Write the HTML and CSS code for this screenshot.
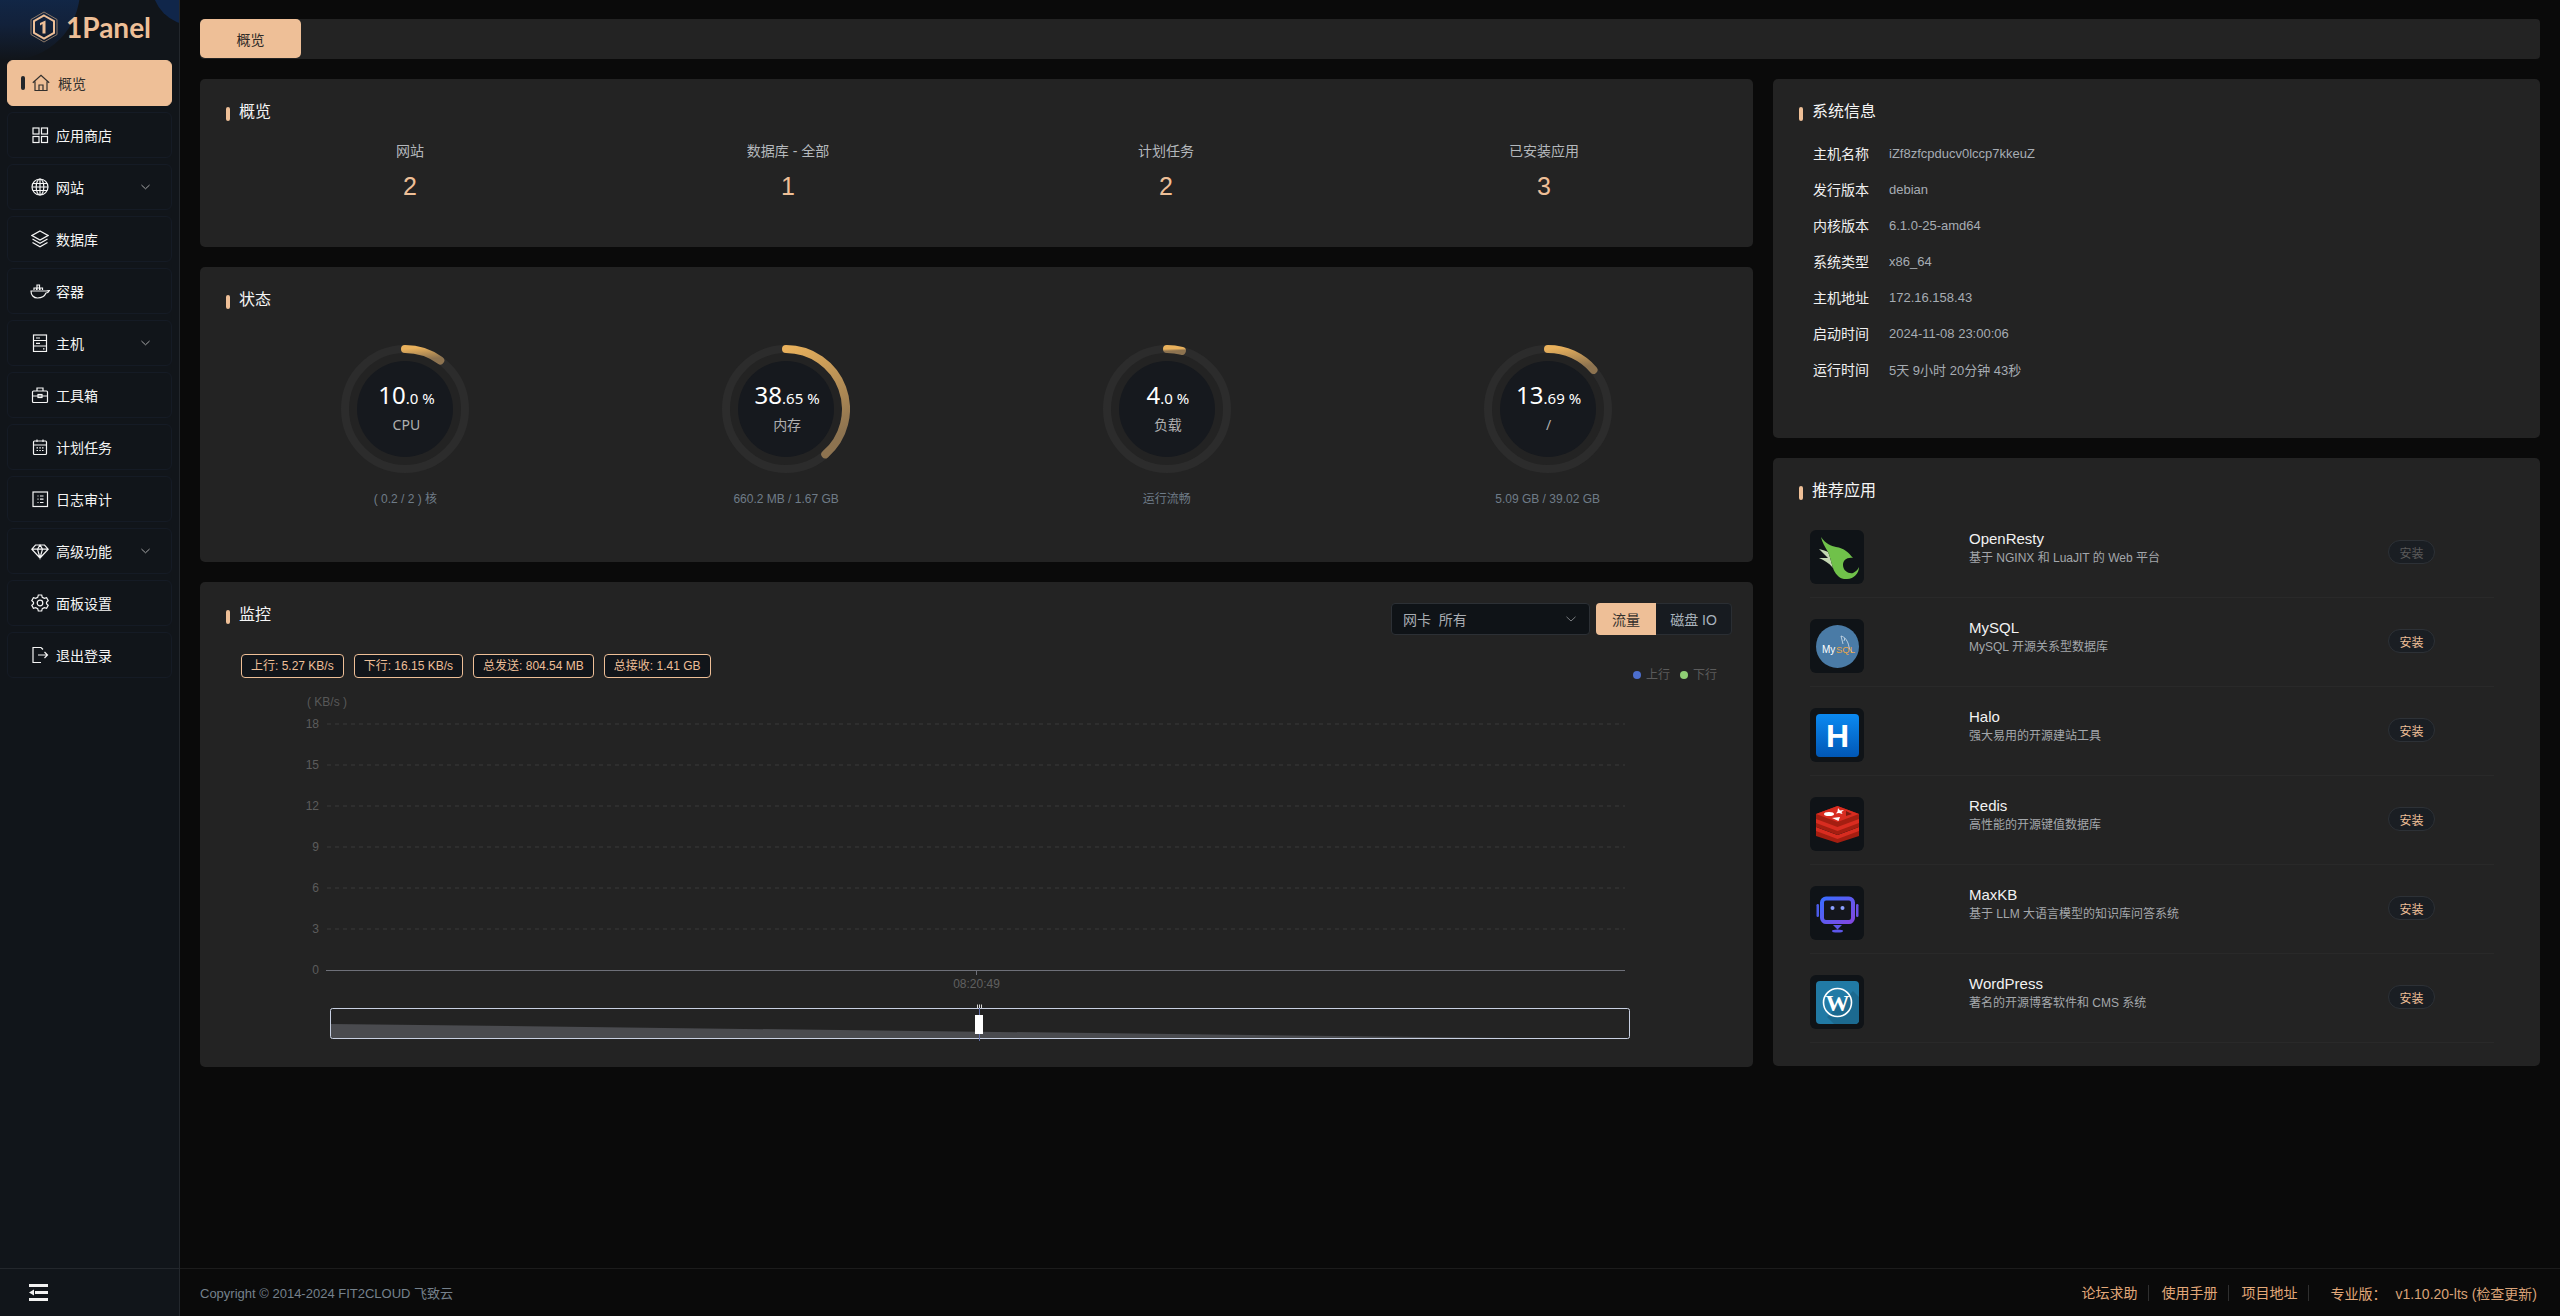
FILE: index.html
```html
<!DOCTYPE html>
<html lang="zh">
<head>
<meta charset="utf-8">
<title>1Panel</title>
<link rel="stylesheet" href="styles.css">
</head>
<body>
<svg class="defs" width="0" height="0" aria-hidden="true">
  <defs>
    <linearGradient id="arc" x1="0" y1="0" x2="0.35" y2="1">
      <stop offset="0" stop-color="#e9b15c"/>
      <stop offset="1" stop-color="#8d7350"/>
    </linearGradient>
    <linearGradient id="halo" x1="0" y1="0" x2="0" y2="1">
      <stop offset="0" stop-color="#0b8af2"/>
      <stop offset="1" stop-color="#0157b5"/>
    </linearGradient>
    <linearGradient id="maxkb" x1="0" y1="0" x2="1" y2="1">
      <stop offset="0" stop-color="#3b6cff"/>
      <stop offset="1" stop-color="#8147e0"/>
    </linearGradient>
  </defs>
</svg>
<aside class="sidebar">
  <span class="glow glow-a"></span>
  <span class="glow glow-b"></span>
  <div class="logo">
    <svg class="logo-mark" viewBox="0 0 28 32">
      <path d="M14 1 L27 8.5 V23.500 L14 31 L1 23.500 V8.500Z" fill="none" stroke="#8a7767" stroke-width="1"/>
      <path d="M14 4.500 L24 10.200 V21.800 L14 27.500 L4 21.800 V10.200Z" fill="none" stroke="#eebf97" stroke-width="2"/>
      <path d="M15.500 9.500 V22.500 H12.500 V13 L10 14.500 V12 Z" fill="#eebf97"/>
    </svg>
    <span class="logo-text">1Panel</span>
  </div>
  <nav class="menu">
    <a class="item active"><span class="pip"></span>
      <svg class="ico" viewBox="0 0 18 18"><path d="M.8 8.800 9 1.300l8.200 7.500M3 7.500V16.500H15V7.500M7 16.500V11H11V16.500"/></svg>概览</a>
    <a class="item">
      <svg class="ico" viewBox="0 0 18 18"><rect x="2" y="2" width="6" height="6"/><rect x="10.500" y="2" width="6" height="6"/><rect x="2" y="10.500" width="6" height="6"/><rect x="10.500" y="10.500" width="6" height="6"/></svg>应用商店</a>
    <a class="item">
      <svg class="ico" viewBox="0 0 18 18"><circle cx="9" cy="9" r="8"/><ellipse cx="9" cy="9" rx="3.800" ry="8"/><path d="M9 1V17M1.800 5.500H16.200M1 9H17M1.800 12.500H16.200"/></svg>网站
      <svg class="chev" viewBox="0 0 10 6"><path d="M.5.800 5 5 9.500.8"/></svg></a>
    <a class="item">
      <svg class="ico" viewBox="0 0 18 18"><path d="M9 1 17 5.500 9 10 1 5.500Z"/><path d="M1.500 9 9 13.200 16.500 9M1.500 12.500 9 16.800 16.500 12.500"/></svg>数据库</a>
    <a class="item">
      <svg class="ico wide" viewBox="0 0 20 18"><path d="M1 9H16.500C17 9 18 8.500 19.500 8.500 18.500 10.500 17 11 16 11 14.500 14.500 11.500 16 7.500 16 3.500 16 1 13 1 9Z"/><path d="M4 8V6H6.500V8M7 8V6H9.500V8M10 8V6H12.500V8M7 5.500V3H9.500V5.500"/></svg>容器</a>
    <a class="item">
      <svg class="ico" viewBox="0 0 18 18"><rect x="2.500" y="1" width="13" height="16.500"/><path d="M2.500 6.500H15.500M2.500 12H15.500M5 4H9M5 9.300H9M12 14.800H13.500"/></svg>主机
      <svg class="chev" viewBox="0 0 10 6"><path d="M.5.800 5 5 9.500.8"/></svg></a>
    <a class="item">
      <svg class="ico" viewBox="0 0 18 18"><rect x="1.500" y="5" width="15" height="11.500" rx="1"/><path d="M6 5V2H12V5M1.500 10H16.500"/><rect x="7" y="8.500" width="4" height="3"/></svg>工具箱</a>
    <a class="item">
      <svg class="ico" viewBox="0 0 18 18"><rect x="2.500" y="3" width="13" height="13.500" rx="1"/><path d="M2.500 7H15.500M6 1.500V4M12 1.500V4M5.500 9.800H7M8.300 9.800H9.800M11 9.800H12.500M5.500 12.500H7M8.300 12.500H9.800M11 12.500H12.500"/></svg>计划任务</a>
    <a class="item">
      <svg class="ico" viewBox="0 0 18 18"><rect x="2" y="2" width="14.500" height="14.500"/><path d="M6.500 6H7.500M6.500 9.200H7.500M6.500 12.500H7.500M9 6H12.500M9 9.200H12.500M9 12.500H12.500"/></svg>日志审计</a>
    <a class="item">
      <svg class="ico" viewBox="0 0 18 18"><path d="M4.500 3H13.500L17.200 7.200 9 16 .8 7.200ZM.8 7.200H17.200M6.500 7.200 9 16 11.500 7.200 9 3 6.500 7.200"/></svg>高级功能
      <svg class="chev" viewBox="0 0 10 6"><path d="M.5.800 5 5 9.500.8"/></svg></a>
    <a class="item">
      <svg class="ico" viewBox="0 0 18 18"><path d="M7.300 1H10.700L11.300 3.300 13.300 4.400 15.600 3.700 17.200 6.700 15.500 8.300V9.700L17.200 11.300 15.600 14.300 13.300 13.600 11.300 14.700 10.700 17H7.300L6.700 14.700 4.700 13.600 2.400 14.300.8 11.300 2.500 9.700V8.300L.8 6.700 2.400 3.700 4.700 4.400 6.700 3.300Z"/><circle cx="9" cy="9" r="2.800"/></svg>面板设置</a>
    <a class="item">
      <svg class="ico" viewBox="0 0 18 18"><path d="M10 1.500H2V16.500H10M10 1.500 12 3.500M7 9H16.500M13.500 6 16.500 9 13.500 12"/></svg>退出登录</a>
  </nav>
  <div class="side-foot">
    <svg class="collapse" viewBox="0 0 19 17"><path d="M0 0H19V3H0ZM0 14H19V17H0ZM6 7H19V10H6ZM0 8.500 5 5.500V11.500Z"/></svg>
  </div>
</aside>

<div class="main">
  <div class="content">
    <div class="tabbar"><span class="tab">概览</span></div>
    <div class="columns">
      <div class="col">
        <section class="card card-overview">
          <h2 class="card-title"><i class="bar"></i>概览</h2>
          <div class="stats">
            <div class="stat"><span class="stat-label">网站</span><span class="stat-num">2</span></div>
            <div class="stat"><span class="stat-label">数据库 - 全部</span><span class="stat-num">1</span></div>
            <div class="stat"><span class="stat-label">计划任务</span><span class="stat-num">2</span></div>
            <div class="stat"><span class="stat-label">已安装应用</span><span class="stat-num">3</span></div>
          </div>
        </section>

        <section class="card card-status">
          <h2 class="card-title"><i class="bar"></i>状态</h2>
          <div class="gauges">
            <div class="gauge-cell">
              <div class="gauge">
                <svg viewBox="0 0 128 128" class="gauge-svg"><circle cx="64" cy="64" r="60" class="track"/><circle cx="64" cy="64" r="48" class="core"/><path d="M64 4A60 60 0 0 1 99.270 15.460" class="arc"/></svg>
                <div class="gauge-text"><span class="g-val">10<small>.0 %</small></span><span class="g-name">CPU</span></div>
              </div>
              <p class="g-cap">( 0.2 / 2 ) 核</p>
            </div>
            <div class="gauge-cell">
              <div class="gauge">
                <svg viewBox="0 0 128 128" class="gauge-svg"><circle cx="64" cy="64" r="60" class="track"/><circle cx="64" cy="64" r="48" class="core"/><path d="M64 4A60 60 0 0 1 103.260 109.370" class="arc"/></svg>
                <div class="gauge-text"><span class="g-val">38<small>.65 %</small></span><span class="g-name">内存</span></div>
              </div>
              <p class="g-cap">660.2 MB / 1.67 GB</p>
            </div>
            <div class="gauge-cell">
              <div class="gauge">
                <svg viewBox="0 0 128 128" class="gauge-svg"><circle cx="64" cy="64" r="60" class="track"/><circle cx="64" cy="64" r="48" class="core"/><path d="M64 4A60 60 0 0 1 78.920 5.880" class="arc"/></svg>
                <div class="gauge-text"><span class="g-val">4<small>.0 %</small></span><span class="g-name">负载</span></div>
              </div>
              <p class="g-cap">运行流畅</p>
            </div>
            <div class="gauge-cell">
              <div class="gauge">
                <svg viewBox="0 0 128 128" class="gauge-svg"><circle cx="64" cy="64" r="60" class="track"/><circle cx="64" cy="64" r="48" class="core"/><path d="M64 4A60 60 0 0 1 109.480 24.860" class="arc"/></svg>
                <div class="gauge-text"><span class="g-val">13<small>.69 %</small></span><span class="g-name">/</span></div>
              </div>
              <p class="g-cap">5.09 GB / 39.02 GB</p>
            </div>
          </div>
        </section>

        <section class="card card-monitor">
          <div class="mon-head">
            <h2 class="card-title"><i class="bar"></i>监控</h2>
            <div class="mon-controls">
              <div class="select"><span>网卡&nbsp; 所有</span><svg class="sel-chev" viewBox="0 0 10 6"><path d="M.5.800 5 5 9.500.8"/></svg></div>
              <div class="toggle"><span class="tg tg-on">流量</span><span class="tg">磁盘 IO</span></div>
            </div>
          </div>
          <div class="mon-info">
            <div class="badges">
              <span class="badge">上行: 5.27 KB/s</span>
              <span class="badge">下行: 16.15 KB/s</span>
              <span class="badge">总发送: 804.54 MB</span>
              <span class="badge">总接收: 1.41 GB</span>
            </div>
            <div class="legend">
              <span class="lg"><i class="dot dot-up"></i>上行</span>
              <span class="lg"><i class="dot dot-down"></i>下行</span>
            </div>
          </div>
          <svg class="chart" viewBox="220 690 1513 365" width="1513" height="365">
            <text x="307" y="706" class="axis-txt">( KB/s )</text>
            <g class="grid-lines">
              <path d="M327 724H1625M327 765H1625M327 806H1625M327 847H1625M327 888H1625M327 929H1625"/>
            </g>
            <g class="axis-num">
              <text x="319" y="728">18</text>
              <text x="319" y="769">15</text>
              <text x="319" y="810">12</text>
              <text x="319" y="851">9</text>
              <text x="319" y="892">6</text>
              <text x="319" y="933">3</text>
              <text x="319" y="974">0</text>
            </g>
            <path d="M326 970.500H1625M976.500 970V975" class="axis-line"/>
            <text x="976.500" y="988" class="axis-time">08:20:49</text>
            <path d="M331 1024 1512 1038H331Z" class="dz-area"/>
            <rect x="330.500" y="1008.500" width="1299" height="30" rx="2" class="dz-frame"/>
            <path d="M979.500 1008V1041" class="dz-line"/>
            <rect x="975" y="1015" width="8" height="19" class="dz-handle"/>
            <path d="M977.500 1004.500V1008M979.500 1004.500V1008M981.500 1004.500V1008" class="dz-grip"/>
          </svg>
        </section>
      </div>

      <div class="col">
        <section class="card card-sys">
          <h2 class="card-title"><i class="bar"></i>系统信息</h2>
          <dl class="sys">
            <div class="sys-row"><dt>主机名称</dt><dd>iZf8zfcpducv0lccp7kkeuZ</dd></div>
            <div class="sys-row"><dt>发行版本</dt><dd>debian</dd></div>
            <div class="sys-row"><dt>内核版本</dt><dd>6.1.0-25-amd64</dd></div>
            <div class="sys-row"><dt>系统类型</dt><dd>x86_64</dd></div>
            <div class="sys-row"><dt>主机地址</dt><dd>172.16.158.43</dd></div>
            <div class="sys-row"><dt>启动时间</dt><dd>2024-11-08 23:00:06</dd></div>
            <div class="sys-row"><dt>运行时间</dt><dd>5天 9小时 20分钟 43秒</dd></div>
          </dl>
        </section>

        <section class="card card-apps">
          <h2 class="card-title"><i class="bar"></i>推荐应用</h2>
          <div class="apps">
            <div class="app">
              <div class="app-ico"><svg viewBox="0 0 43 43">
                <path d="M3 13C6 16 9 19 12 22 9 22 6 22 3 22 8 24 13 27 17 32 15 26 14 20 12 16 10 15 7 14 3 13Z" fill="#c3d6b2"/>
                <path d="M5 1C10 8 15 10 20 11 28 12 33 17 37 22 31 21 27 24 27 29 27 35 33 38 37 37 39 36 42 34 43 31 43 37 38 43 31 43 24 44 19 38 17 32 15 26 14 20 12 16 9 11 6 6 5 1Z" fill="#70c14a"/>
              </svg></div>
              <div class="app-text"><span class="app-name">OpenResty</span><span class="app-desc">基于 NGINX 和 LuaJIT 的 Web 平台</span></div>
              <button class="install off">安装</button>
            </div>
            <div class="app">
              <div class="app-ico"><svg viewBox="0 0 43 43">
                <circle cx="21.500" cy="21.500" r="21.500" fill="#4a7ba6"/>
                <path d="M25 11C29 12 32 16 33 22 34 25 36 27 37 28M25 11 27 19M29 13 28 16" fill="none" stroke="#d7e3ee" stroke-width=".8"/>
                <text x="6" y="28" class="my">My</text><text x="20" y="28" class="sql">SQL</text>
              </svg></div>
              <div class="app-text"><span class="app-name">MySQL</span><span class="app-desc">MySQL 开源关系型数据库</span></div>
              <button class="install">安装</button>
            </div>
            <div class="app">
              <div class="app-ico"><svg viewBox="0 0 43 43">
                <rect width="43" height="43" rx="4" fill="url(#halo)"/>
                <text x="21.500" y="33" class="halo-h">H</text>
              </svg></div>
              <div class="app-text"><span class="app-name">Halo</span><span class="app-desc">强大易用的开源建站工具</span></div>
              <button class="install">安装</button>
            </div>
            <div class="app">
              <div class="app-ico"><svg viewBox="0 0 43 43">
                <path d="M0 24 21.500 34 43 24V33L21.500 40 0 33Z" fill="#a41e11"/>
                <path d="M0 24 21.500 32 43 24V28L21.500 36 0 28Z" fill="#d82c20"/>
                <path d="M0 15 21.500 23 43 15V24L21.500 32 0 24Z" fill="#a41e11"/>
                <path d="M0 15 21.500 23 43 15V20L21.500 28 0 20Z" fill="#d82c20"/>
                <path d="M21.500 3 43 11V16L21.500 24 0 16V11Z" fill="#a41e11"/>
                <path d="M21.500 3 43 11 21.500 19 0 11Z" fill="#d82c20"/>
                <ellipse cx="13" cy="11" rx="5" ry="2" fill="#fff"/>
                <path d="M22 5 24 7.500 28 7 25.500 9 26.500 11 23 10 20 10.500 21.500 8.500Z" fill="#fff"/>
                <path d="M16 15 24 14 22.500 18Z" fill="#fff"/>
                <path d="M30 8 36 11 30 13Z" fill="#7a1a10"/>
              </svg></div>
              <div class="app-text"><span class="app-name">Redis</span><span class="app-desc">高性能的开源键值数据库</span></div>
              <button class="install">安装</button>
            </div>
            <div class="app">
              <div class="app-ico"><svg viewBox="0 0 43 43">
                <path d="M10 6.500H33C35 6.500 37 8.500 37 10.500V26C37 28 35 30 33 30H10C8 30 6 28 6 26V10.500C6 8.500 8 6.500 10 6.500Z" fill="#14161c" stroke="url(#maxkb)" stroke-width="4"/>
                <rect x="0.500" y="12" width="2.500" height="13" rx="1.200" fill="#4a5be8"/>
                <rect x="40" y="12" width="2.500" height="13" rx="1.200" fill="#6a50e6"/>
                <circle cx="16.500" cy="16" r="2" fill="#8ca0ff"/><circle cx="26.500" cy="16" r="2" fill="#8ca0ff"/>
                <path d="M17 33H26L21.500 37.500Z" fill="#5d56ea"/>
                <ellipse cx="21.500" cy="39" rx="5.500" ry="1.500" fill="#5d56ea"/>
              </svg></div>
              <div class="app-text"><span class="app-name">MaxKB</span><span class="app-desc">基于 LLM 大语言模型的知识库问答系统</span></div>
              <button class="install">安装</button>
            </div>
            <div class="app">
              <div class="app-ico"><svg viewBox="0 0 43 43">
                <rect width="43" height="43" rx="4" fill="#217aa5"/>
                <path d="M11 36 37 10 43 16V39C43 41 41 43 39 43H18Z" fill="#1c6a90"/>
                <circle cx="21.500" cy="21.500" r="14" fill="none" stroke="#fff" stroke-width="1.600"/>
                <text x="21.500" y="30" class="wp-w">W</text>
              </svg></div>
              <div class="app-text"><span class="app-name">WordPress</span><span class="app-desc">著名的开源博客软件和 CMS 系统</span></div>
              <button class="install">安装</button>
            </div>
          </div>
        </section>
      </div>
    </div>
  </div>

  <footer class="foot">
    <span class="copy">Copyright © 2014-2024 FIT2CLOUD 飞致云</span>
    <div class="foot-links">
      <a class="fl">论坛求助</a>
      <a class="fl">使用手册</a>
      <a class="fl">项目地址</a>
      <span class="ver">专业版：<span class="ver-num">v1.10.20-lts (检查更新)</span></span>
    </div>
  </footer>
</div>
</body>
</html>
```

FILE: styles.css
```css
* { box-sizing: border-box; }
html, body { margin: 0; height: 100%; }
body {
  display: flex;
  height: 100vh;
  overflow: hidden;
  background: #0a0a0a;
  color: #e6e6e6;
  font-family: "Liberation Sans", "Noto Sans CJK SC", sans-serif;
  font-size: 14px;
}
.defs { position: absolute; }

/* sidebar */
.sidebar {
  position: relative;
  flex: 0 0 180px;
  display: flex;
  flex-direction: column;
  overflow: hidden;
  background: #11151a;
  border-right: 1px solid #23272c;
}
.glow { position: absolute; border-radius: 50%; }
.glow-a {
  left: -60px; top: -80px; width: 140px; height: 140px;
  background: linear-gradient(180deg, #112e57 30%, #12213a 75%, #11151a 100%);
}
.glow-b {
  left: 152px; top: -55px; width: 80px; height: 80px;
  background: #10264a;
}
.logo {
  position: relative;
  height: 60px;
  display: flex;
  align-items: center;
  padding: 0 0 6px 30px;
  gap: 8px;
}
.logo-mark { width: 28px; height: 32px; }
.logo-text {
  font-family: "Lato", sans-serif;
  font-weight: 700;
  font-size: 28px;
  line-height: 1;
  color: #eebf97;
}
.menu {
  position: relative;
  flex: 1;
  display: flex;
  flex-direction: column;
  gap: 6px;
  padding: 0 7px;
}
.item {
  position: relative;
  height: 46px;
  display: flex;
  align-items: center;
  gap: 7px;
  padding: 0 21px 0 23px;
  border: 1px solid #151b25;
  border-radius: 6px;
  color: #f5f5f5;
  font-size: 14px;
}
.item.active {
  background: #eebf97;
  border-color: #eebf97;
  color: #33302d;
  padding-left: 24px;
  gap: 8px;
}
.pip {
  position: absolute;
  left: 13px; top: 15px;
  width: 4px; height: 14px;
  border-radius: 2px;
  background: #22262b;
}
.ico {
  flex: 0 0 18px;
  width: 18px; height: 18px;
  fill: none;
  stroke: currentColor;
  stroke-width: 1.2;
}
.ico.wide { flex-basis: 20px; width: 20px; margin-left: -1px; margin-right: -1px; }
.chev {
  margin-left: auto;
  width: 9px; height: 6px;
  fill: none;
  stroke: #b5b5b5;
  stroke-width: 1;
}
.side-foot {
  position: relative;
  height: 48px;
  display: flex;
  align-items: center;
  padding-left: 29px;
  border-top: 1px solid #23272c;
}
.collapse { width: 19px; height: 17px; fill: #f2f2f2; }

/* main */
.main {
  flex: 1;
  min-width: 0;
  display: flex;
  flex-direction: column;
}
.content {
  flex: 1;
  min-height: 0;
  padding: 19px 20px 0;
}
.tabbar {
  height: 40px;
  background: #232323;
  border-radius: 4px;
  margin-bottom: 20px;
}
.tab {
  display: flex;
  align-items: center;
  justify-content: center;
  width: 101px;
  height: 39px;
  background: #eebf97;
  border-radius: 5px;
  color: #2d2a27;
}
.columns {
  display: grid;
  grid-template-columns: 1553px 767px;
  column-gap: 20px;
}
.col {
  display: flex;
  flex-direction: column;
  gap: 20px;
}
.card {
  background: #232323;
  border-radius: 5px;
  padding: 20px;
}
.card-overview { height: 168px; }
.card-status { height: 295px; }
.card-monitor { height: 485px; padding-bottom: 0; }
.card-sys { height: 359px; }
.card-apps { height: 608px; }
.card-title {
  display: flex;
  margin: 0;
  padding-left: 6px;
  height: 24px;
  line-height: 26px;
  font-size: 16px;
  font-weight: 400;
  color: #f5f5f5;
}
.bar {
  flex: 0 0 4px;
  height: 14px;
  margin: 8px 9px 0 0;
  border-radius: 2px;
  background: #eebf97;
}

/* overview */
.stats {
  display: grid;
  grid-template-columns: repeat(4, 1fr);
  margin-top: 18px;
  padding-left: 1px;
}
.stat {
  display: flex;
  flex-direction: column;
  align-items: center;
  gap: 10px;
}
.stat-label { line-height: 20px; color: #b4b8bc; }
.stat-num { line-height: 30px; font-size: 25px; color: #eebf97; }

/* gauges */
.gauges {
  display: grid;
  grid-template-columns: repeat(4, 1fr);
  margin: 34px -5px 0;
}
.gauge-cell {
  display: flex;
  flex-direction: column;
  align-items: center;
}
.gauge { position: relative; width: 128px; height: 128px; }
.gauge-svg { display: block; width: 128px; height: 128px; }
.track { fill: none; stroke: #2c2c2c; stroke-width: 8; }
.core { fill: #16191e; }
.arc {
  fill: none;
  stroke: url(#arc);
  stroke-width: 8;
  stroke-linecap: round;
}
.gauge-text {
  position: absolute;
  inset: 0;
  display: flex;
  flex-direction: column;
  align-items: center;
  padding: 34px 0 0 2px;
  font-family: "Noto Sans", "Noto Sans CJK SC", sans-serif;
}
.g-val { height: 32px; line-height: 32px; font-size: 24px; color: #fff; }
.g-val small { font-size: 15px; }
.g-name { margin-top: 4px; line-height: 20px; font-size: 14px; color: #b0b0b0; }
.g-cap {
  margin: 17px 0 0;
  line-height: 18px;
  font-size: 12px;
  color: #6f7c88;
}

/* monitor */
.mon-head {
  display: flex;
  justify-content: space-between;
  height: 33px;
}
.mon-controls {
  display: flex;
  gap: 6px;
  margin: 1px 1px 0 0;
  height: 32px;
}
.select {
  width: 199px;
  display: flex;
  align-items: center;
  justify-content: space-between;
  padding: 0 13px 0 11px;
  background: #0f1317;
  border: 1px solid #2c3035;
  border-radius: 4px;
  color: #a9adb2;
}
.sel-chev { width: 10px; height: 6px; fill: none; stroke: #7a7d80; stroke-width: 1; }
.toggle {
  display: flex;
  background: #171b20;
  border: 1px solid #2a2e33;
  border-radius: 4px;
}
.tg {
  display: flex;
  align-items: center;
  justify-content: center;
  width: 75px;
  color: #a9b3bd;
}
.tg-on {
  width: 60px;
  margin: -1px 0 -1px -1px;
  background: #eebf97;
  border-radius: 4px 0 0 4px;
  color: #33302d;
}
.mon-info {
  display: flex;
  justify-content: space-between;
  height: 30px;
  margin: 19px 0 6px;
  padding: 0 16px 0 21px;
}
.badges { display: flex; gap: 10px; }
.badge {
  height: 24px;
  padding: 0 9px;
  line-height: 22px;
  font-size: 12px;
  color: #eebf97;
  background: #11151a;
  border: 1px solid #eebf97;
  border-radius: 4px;
}
.legend {
  display: flex;
  gap: 10px;
  margin-top: 12px;
  line-height: 18px;
  font-size: 12px;
  color: #5b5b5b;
}
.lg { display: flex; align-items: center; gap: 5px; }
.dot { width: 8px; height: 8px; border-radius: 50%; }
.dot-up { background: #4c6ecd; }
.dot-down { background: #8fce74; }
.chart { display: block; font-size: 12px; font-family: "Liberation Sans", sans-serif; }
.axis-txt { fill: #585858; }
.grid-lines path { fill: none; stroke: #3a3a3a; stroke-dasharray: 4 4; }
.axis-num text { fill: #5c5c5c; text-anchor: end; }
.axis-line { fill: none; stroke: #6e7079; }
.axis-time { fill: #606060; text-anchor: middle; }
.dz-area { fill: #4a4b4f; }
.dz-frame { fill: none; stroke: #c8d0e2; stroke-width: 1; }
.dz-line { fill: none; stroke: #5f6da8; }
.dz-handle { fill: #fff; }
.dz-grip { fill: none; stroke: #d9d9d9; }

/* system info */
.sys { margin: 12px 0 0; padding-left: 20px; }
.sys-row { display: flex; height: 36px; align-items: center; }
.sys-row dt { width: 76px; color: #f0f0f0; }
.sys-row dd { margin: 0; font-size: 13px; color: #a6acb3; }

/* apps */
.apps { margin: 7px 26px 0 17px; }
.app {
  display: flex;
  align-items: flex-start;
  height: 89px;
  padding-top: 21px;
  border-bottom: 1px solid #292929;
}
.app-ico {
  flex: 0 0 54px;
  height: 54px;
  padding: 5.500px;
  margin-right: 105px;
  background: #0f1317;
  border-radius: 6px;
}
.app-ico svg { display: block; width: 43px; height: 43px; }
.app-text { flex: 1; display: flex; flex-direction: column; }
.app-name { line-height: 18px; font-size: 15px; color: #f2f2f2; }
.app-desc { margin-top: 1px; line-height: 18px; font-size: 12px; color: #a3a7ab; }
.install {
  width: 47px;
  height: 24px;
  margin: 10px 59px 0 0;
  padding: 0;
  background: #1a1e23;
  border: 1px solid #2d3136;
  border-radius: 12px;
  font: inherit;
  font-size: 12px;
  color: #eebf97;
}
.install.off { color: #5a5a5a; }
.my { font: 10px "Liberation Sans", sans-serif; fill: #fff; }
.sql { font: 9.5px "Liberation Sans", sans-serif; fill: #e8a54a; }
.halo-h { font: 700 32px "Liberation Sans", sans-serif; fill: #fff; text-anchor: middle; }
.wp-w { font: 700 24px "Liberation Serif", serif; fill: #fff; text-anchor: middle; }

/* footer */
.foot {
  flex: 0 0 48px;
  display: flex;
  align-items: center;
  justify-content: space-between;
  padding: 0 23px 0 20px;
  border-top: 1px solid #1c1c1c;
}
.copy { font-size: 13px; color: #75818c; }
.foot-links { display: flex; align-items: center; }
.fl {
  padding-right: 11px;
  margin-right: 12px;
  border-right: 1px solid #2f2f2f;
  line-height: 16px;
  color: #e2a879;
}
.ver { margin-left: 9px; color: #e2a879; }
.ver-num { margin-left: 9px; color: #d9a277; }
```
